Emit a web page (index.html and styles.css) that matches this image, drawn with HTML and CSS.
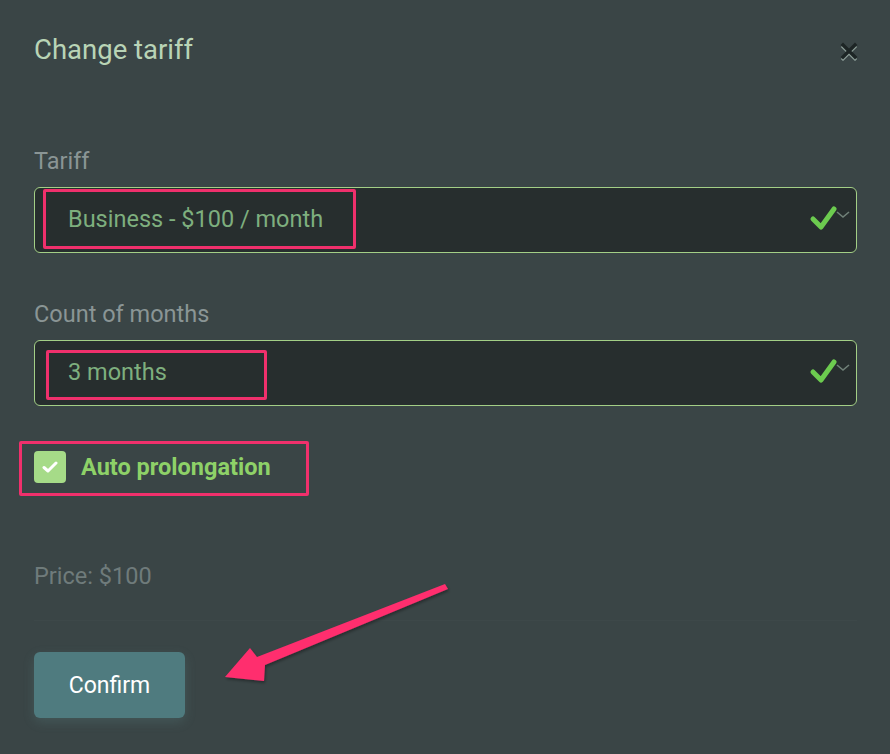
FILE: index.html
```html
<!DOCTYPE html>
<html>
<head>
<meta charset="utf-8">
<link rel="stylesheet" href="styles.css">
</head>
<body>
<div class="modal">
  <div class="header">
    <h1 class="title">Change tariff</h1>
    <svg class="close" width="20" height="20" viewBox="0 0 20 20">
      <path d="M4 5 L16 17 M16 5 L4 17" stroke="#8fa09a" stroke-width="3" stroke-linecap="square" transform="translate(0,1)"/>
      <path d="M4 4 L16 16 M16 4 L4 16" stroke="#1d2525" stroke-width="3.4" stroke-linecap="square"/>
    </svg>
  </div>

  <div class="field field-first">
    <div class="label">Tariff</div>
    <div class="select">
      <span class="value">Business - $100 / month</span>
      <svg class="valid" width="44" height="30" viewBox="0 0 44 30">
        <path d="M28 13 L34 8 L40 13" fill="none" stroke="#708078" stroke-width="1.6" transform="rotate(180 34 10.5)"/>
        <path d="M4 15 L12 23 L25 5" fill="none" stroke="#6ccb4f" stroke-width="5" stroke-linecap="round" stroke-linejoin="round"/>
      </svg>
    </div>
  </div>

  <div class="field">
    <div class="label">Count of months</div>
    <div class="select">
      <span class="value">3 months</span>
      <svg class="valid" width="44" height="30" viewBox="0 0 44 30">
        <path d="M28 13 L34 8 L40 13" fill="none" stroke="#708078" stroke-width="1.6" transform="rotate(180 34 10.5)"/>
        <path d="M4 15 L12 23 L25 5" fill="none" stroke="#6ccb4f" stroke-width="5" stroke-linecap="round" stroke-linejoin="round"/>
      </svg>
    </div>
  </div>

  <label class="checkrow">
    <span class="checkbox">
      <svg width="16" height="14" viewBox="0 0 16 14"><path d="M2 7.5 L6 11 L14 3" fill="none" stroke="#ffffff" stroke-width="3" stroke-linecap="round" stroke-linejoin="round"/></svg>
    </span>
    <span class="checktext">Auto prolongation</span>
  </label>

  <div class="price">Price: $100</div>
  <div class="divider"></div>

  <button class="confirm">Confirm</button>
</div>

<div class="mark mark-tariff"></div>
<div class="mark mark-months"></div>
<div class="mark mark-auto"></div>
<svg class="arrow" width="890" height="754" viewBox="0 0 890 754">
  <defs>
    <filter id="sh" x="-10%" y="-10%" width="130%" height="130%">
      <feDropShadow dx="1" dy="2" stdDeviation="1.5" flood-color="#000" flood-opacity="0.35"/>
    </filter>
  </defs>
  <polygon filter="url(#sh)" fill="#ff2d6e" points="445,584 448,589 265,665 264,681 225,677 250,648 257,657"/>
</svg>
</body>
</html>
```

FILE: styles.css
```css
html, body {
  margin: 0;
  padding: 0;
  background: #3a4546;
}
body {
  width: 890px;
  height: 754px;
  overflow: hidden;
  font-family: Roboto, "Liberation Sans", Arial, sans-serif;
  position: relative;
}
.modal {
  padding: 0 33px 0 34px;
  display: flex;
  flex-direction: column;
}
.header {
  display: flex;
  justify-content: space-between;
  align-items: center;
  height: 32px;
  margin-top: 34px;
}
.title {
  margin: 0;
  font-size: 27.5px;
  font-weight: 400;
  line-height: 32px;
  color: #b9d4b6;
}
.close {
  margin-right: -2px;
  margin-top: 2px;
}
.field {
  display: flex;
  flex-direction: column;
}
.field-first {
  margin-top: 81px;
}
.field + .field {
  margin-top: 47px;
}
.label {
  font-size: 23.5px;
  line-height: 28px;
  color: #8a9595;
  margin-bottom: 12px;
}
.select {
  height: 64px;
  border: 1px solid #a3cf86;
  border-radius: 6px;
  background: #272e2e;
  display: flex;
  align-items: center;
  justify-content: space-between;
  padding: 0 3px 0 33px;
}
.value {
  font-size: 23.5px;
  color: #7eaf7e;
  line-height: 28px;
  margin-top: -2px;
}
.valid {
  margin-top: -2px;
}
.checkrow {
  display: flex;
  align-items: center;
  margin-top: 45px;
  height: 32px;
}
.checkbox {
  width: 32px;
  height: 32px;
  border-radius: 4px;
  background: #a6db88;
  display: flex;
  align-items: center;
  justify-content: center;
}
.checktext {
  margin-left: 15px;
  font-size: 23.5px;
  font-weight: 700;
  color: #8ed168;
  line-height: 28px;
}
.price {
  margin-top: 79px;
  font-size: 23.5px;
  line-height: 28px;
  color: #6f7b7b;
}
.divider {
  margin-top: 30px;
  height: 1px;
  background: rgba(255, 255, 255, 0.02);
}
.confirm {
  margin-top: 31px;
  align-self: flex-start;
  width: 151px;
  height: 66px;
  border: none;
  border-radius: 6px;
  background: #4f7b7f;
  color: #ffffff;
  font-family: Roboto, "Liberation Sans", Arial, sans-serif;
  font-size: 23px;
  box-shadow: 0 4px 12px rgba(110, 170, 170, 0.18);
  padding: 0;
}
.mark {
  position: absolute;
  border: 3px solid #f0306c;
  border-radius: 2px;
  box-sizing: border-box;
}
.mark-tariff {
  left: 43px;
  top: 189px;
  width: 313px;
  height: 60px;
}
.mark-months {
  left: 46px;
  top: 350px;
  width: 221px;
  height: 50px;
}
.mark-auto {
  left: 19px;
  top: 441px;
  width: 290px;
  height: 55px;
}
.arrow {
  position: absolute;
  left: 0;
  top: 0;
  pointer-events: none;
}
```
